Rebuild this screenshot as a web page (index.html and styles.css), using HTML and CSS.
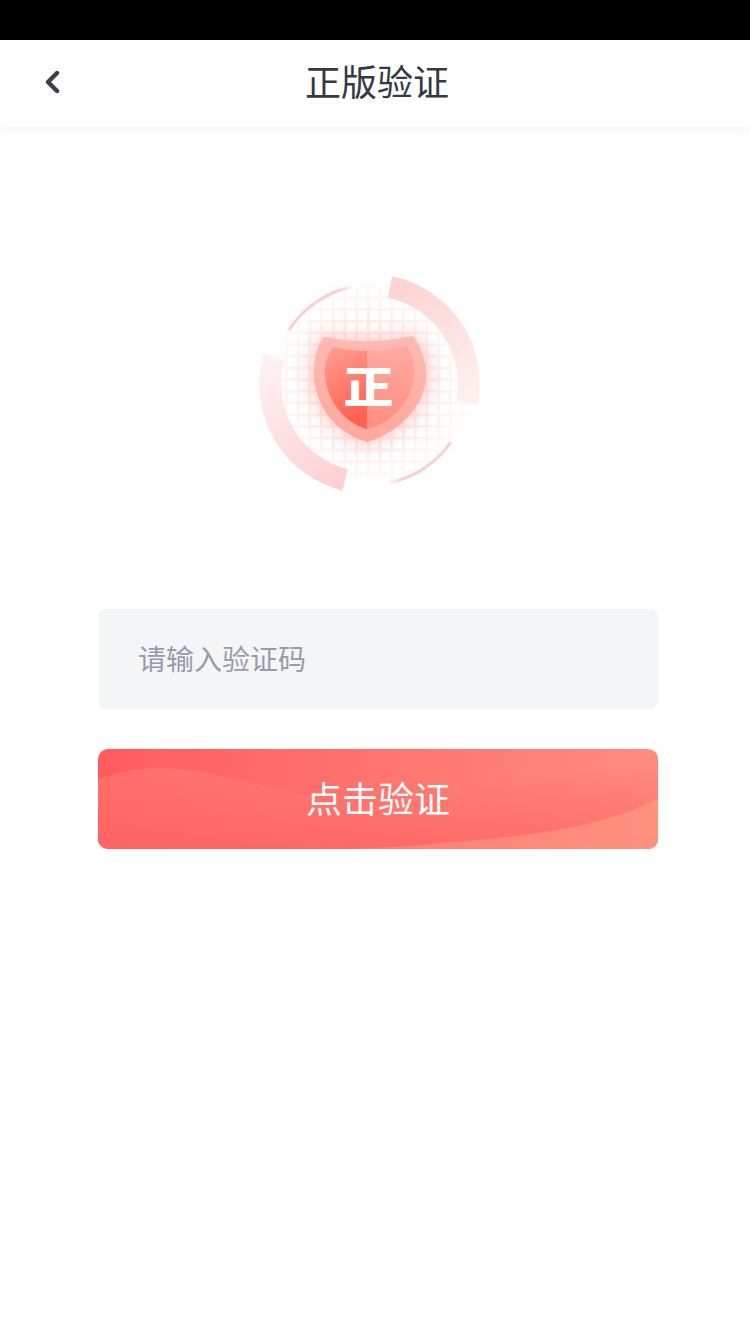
FILE: index.html
```html
<!DOCTYPE html>
<html lang="zh-CN">
<head>
  <meta charset="UTF-8">
  <meta name="viewport" content="width=device-width, initial-scale=1.0">
  <title>正版验证</title>
  <link rel="stylesheet" href="styles.css">
</head>
<body>
  <div class="status-bar"></div>
  <div class="navbar">
    <button class="back-btn" aria-label="返回">
      <svg width="16" height="24" viewBox="0 0 16 24">
        <path d="M13 3 L4 12 L13 21" fill="none" stroke="#3a4049" stroke-width="4.4" stroke-linecap="round" stroke-linejoin="round"/>
      </svg>
    </button>
    <h1 class="page-title">正版验证</h1>
  </div>
  <div class="container">
    <svg class="emblem" width="240" height="240" viewBox="0 0 240 240">
      <defs>
        <pattern id="grid" width="11.7" height="11.7" patternUnits="userSpaceOnUse" x="0" y="9">
          <path d="M0 0 H11.7 V2.6 H2.6 V11.7 H0 Z" fill="#fde4e2"/>
        </pattern>
        <radialGradient id="grid-fade">
          <stop offset="0" stop-color="#fff"/>
          <stop offset="0.55" stop-color="#fff" stop-opacity="0.75"/>
          <stop offset="1" stop-color="#fff" stop-opacity="0"/>
        </radialGradient>
        <mask id="grid-mask">
          <circle cx="120" cy="120" r="110" fill="url(#grid-fade)"/>
        </mask>
        <linearGradient id="ring-a" gradientUnits="userSpaceOnUse" x1="140" y1="20" x2="225" y2="140">
          <stop offset="0" stop-color="#fdd2d2"/>
          <stop offset="1" stop-color="#fef1f1"/>
        </linearGradient>
        <linearGradient id="ring-b" gradientUnits="userSpaceOnUse" x1="15" y1="100" x2="90" y2="225">
          <stop offset="0" stop-color="#fef1f1"/>
          <stop offset="1" stop-color="#fdd0d2"/>
        </linearGradient>
        <linearGradient id="thin-a" gradientUnits="userSpaceOnUse" x1="40" y1="65" x2="105" y2="22">
          <stop offset="0" stop-color="#fccfcf"/>
          <stop offset="0.8" stop-color="#fccfcf"/>
          <stop offset="1" stop-color="#fccfcf" stop-opacity="0"/>
        </linearGradient>
        <linearGradient id="thin-b" gradientUnits="userSpaceOnUse" x1="202" y1="178" x2="135" y2="220">
          <stop offset="0" stop-color="#fccfcf"/>
          <stop offset="0.8" stop-color="#fccfcf"/>
          <stop offset="1" stop-color="#fccfcf" stop-opacity="0"/>
        </linearGradient>
        <linearGradient id="shield-left" x1="0" y1="0" x2="0.3" y2="1">
          <stop offset="0" stop-color="#ff9f95"/>
          <stop offset="1" stop-color="#ff624f"/>
        </linearGradient>
        <linearGradient id="shield-right" x1="0" y1="0" x2="0" y2="1">
          <stop offset="0" stop-color="#ffaaa2"/>
          <stop offset="1" stop-color="#ff8d80"/>
        </linearGradient>
        <linearGradient id="shield-rim" x1="0" y1="0" x2="0" y2="1">
          <stop offset="0" stop-color="#ffbab3"/>
          <stop offset="1" stop-color="#ffa79d"/>
        </linearGradient>
        <filter id="soft" x="-40%" y="-40%" width="180%" height="180%">
          <feGaussianBlur stdDeviation="9"/>
        </filter>
      </defs>

      <g transform="translate(1 1)">
        <rect x="10" y="10" width="220" height="220" fill="url(#grid)" mask="url(#grid-mask)"/>
        <path d="M140 23 A99 99 0 0 1 217 139" fill="none" stroke="url(#ring-a)" stroke-width="22"/>
        <path d="M24 93 A99 99 0 0 0 95 216" fill="none" stroke="url(#ring-b)" stroke-width="22"/>
        <path d="M39 66 A99 99 0 0 1 101 23" fill="none" stroke="url(#thin-a)" stroke-width="3"/>
        <path d="M201 178 A99 99 0 0 1 138 219" fill="none" stroke="url(#thin-b)" stroke-width="3"/>
      </g>

      <!-- shield -->
      <path d="M72 72 Q118 78 166 72 C175 84 182 100 180 116 C177 148 148 172 118 183 C88 172 65 148 62 116 C61 100 63 88 72 72 Z" fill="#ff9f96" opacity="0.55" filter="url(#soft)"/>
      <path d="M76 74 Q118 83 163 73 Q166 74 167 77 C173 87 178 100 177 116 C174 146 148 170 118 179 C88 170 68 146 65 116 C64 100 67 87 73 76 Q74 74 76 74 Z" fill="url(#shield-rim)"/>
      <path d="M84 84 Q100 88 118 88 V166 C95 160 79 138 76 114 C75 103 78 92 84 84 Z" fill="url(#shield-left)"/>
      <path d="M118 88 Q138 88 158 83 C163 90 166 102 165 113 C162 138 144 160 118 166 Z" fill="url(#shield-right)"/>
      <text class="emblem-char" transform="translate(119.5 139.5) scale(1 0.86)" text-anchor="middle">正</text>
    </svg>

    <input class="code-input" type="text" placeholder="请输入验证码">

    <button class="verify-btn">
      <svg class="verify-waves" width="560" height="100" viewBox="0 0 560 100" preserveAspectRatio="none">
        <defs>
          <linearGradient id="wave-h" gradientUnits="userSpaceOnUse" x1="0" y1="0" x2="560" y2="0">
            <stop offset="0" stop-color="#ff6f6b"/>
            <stop offset="1" stop-color="#ff8b7d"/>
          </linearGradient>
          <linearGradient id="wave-v" gradientUnits="userSpaceOnUse" x1="0" y1="15" x2="0" y2="100">
            <stop offset="0" stop-color="#ff5c5c" stop-opacity="0"/>
            <stop offset="1" stop-color="#ff5c5c" stop-opacity="0.6"/>
          </linearGradient>
          <linearGradient id="wave-low" gradientUnits="userSpaceOnUse" x1="250" y1="0" x2="560" y2="0">
            <stop offset="0" stop-color="#ff7d72"/>
            <stop offset="1" stop-color="#ff917f"/>
          </linearGradient>
        </defs>
        <path d="M0 31 C20 23 40 19 60 19 C110 19 160 38 210 46 C260 54 300 48 342 41 C400 31 442 20 560 3 V100 H0 Z" fill="url(#wave-h)"/>
        <path d="M0 31 C20 23 40 19 60 19 C110 19 160 38 210 46 C260 54 300 48 342 41 C400 31 442 20 560 3 V100 H0 Z" fill="url(#wave-v)"/>
        <path d="M250 100 C300 98 330 96 342 94 C400 90 440 85 475 78 C510 71 540 60 560 49 V100 Z" fill="url(#wave-low)"/>
      </svg>
      <span class="verify-label">点击验证</span>
    </button>
  </div>
</body>
</html>
```

FILE: styles.css
```css
* {
  box-sizing: border-box;
}
body {
  font-family: "Noto Sans CJK SC", "Noto Sans", sans-serif;
  margin: 0;
  background-color: white;
  color: #3a4049;
}
.status-bar {
  height: 40px;
  background-color: black;
}
.navbar {
  height: 87px;
  display: flex;
  align-items: center;
  justify-content: center;
  position: relative;
  padding-left: 4px;
  background-color: white;
  box-shadow: 0 2px 10px rgba(0,0,0,0.05);
}
.back-btn {
  position: absolute;
  left: 44px;
  top: 30px;
  padding: 0;
  border: none;
  background: none;
  line-height: 0;
}
.page-title {
  margin: 0;
  padding-bottom: 6px;
  font-size: 36px;
  font-weight: 400;
  line-height: 81px;
  color: #343a43;
}
.container {
  display: flex;
  flex-direction: column;
  padding-left: 98px;
  width: 658px;
}
.emblem {
  margin: 136px 0 0 151px;
  display: block;
}
.emblem-char {
  font-family: "Noto Sans CJK SC", sans-serif;
  font-size: 50px;
  font-weight: 900;
  fill: white;
}
.code-input {
  margin-top: 106px;
  height: 100px;
  width: 100%;
  padding: 0 40px 2px;
  border: none;
  border-radius: 8px;
  background-color: #f4f5f7;
  font-family: inherit;
  font-size: 28px;
  color: #3a4049;
  outline: none;
}
.code-input::placeholder {
  color: #969da8;
  opacity: 1;
}
.verify-btn {
  margin-top: 40px;
  height: 100px;
  width: 100%;
  position: relative;
  padding: 0 0 4px;
  border: none;
  border-radius: 10px;
  overflow: hidden;
  background: linear-gradient(100deg, #ff5c5c 0%, #ff8e7f 100%);
  font-family: inherit;
  font-size: 36px;
  color: white;
}
.verify-waves {
  position: absolute;
  left: 0;
  top: 0;
}
.verify-label {
  position: relative;
}
```
